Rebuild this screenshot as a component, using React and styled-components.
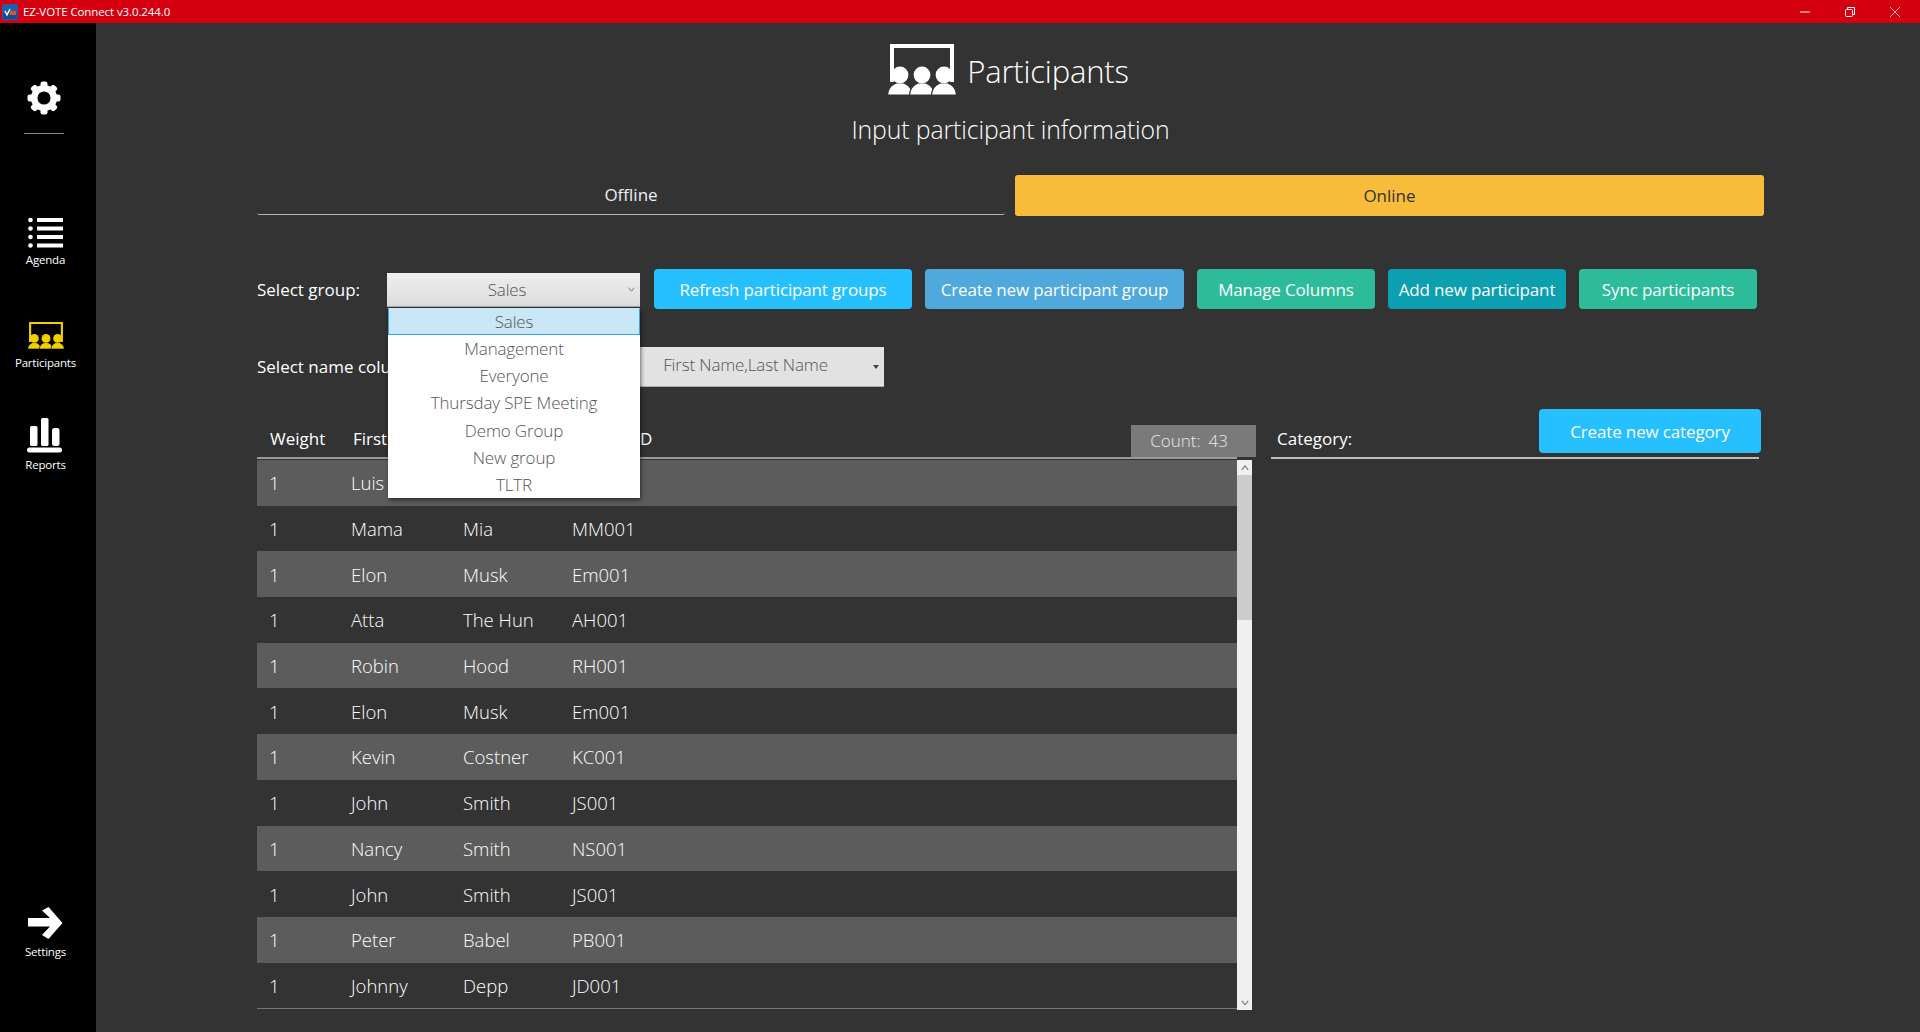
import React from 'react'
import styled, { createGlobalStyle } from 'styled-components'

const GlobalStyle = createGlobalStyle`
html, body {
  margin: 0;
  padding: 0;
  height: 100%;
  background: #333;
  overflow: hidden;
}
* { box-sizing: border-box; }
`

const FONT = `"Open Sans", "Liberation Sans", sans-serif`

const Page = styled.div`
width: 1920px;
height: 1032px;
display: flex;
flex-direction: column;
font-family: ${FONT};
color: #fff;
background: #333;
`

const TitleBar = styled.div`
height: 23px;
flex: none;
background: #d4000f;
display: flex;
align-items: center;
padding-left: 2px;
font-size: 11.5px;
`

const AppName = styled.span`
margin-left: 5px;
flex: 1;
letter-spacing: -0.1px;
`

const WindowControls = styled.div`
display: flex;
align-items: center;
padding-right: 20px;
gap: 35px;
`

const Body = styled.div`
flex: 1;
display: flex;
min-height: 0;
`

const Sidebar = styled.nav`
width: 96px;
flex: none;
background: #000;
display: flex;
flex-direction: column;
align-items: center;
padding: 58px 5px 73px 0;
`

const Gear = styled.div`
display: flex;
margin-right: 3px;
`

const Divider = styled.div`
width: 40px;
height: 1px;
margin: 18px 3px 0 0;
background: #8a8a8a;
`

const NavItem = styled.div`
display: flex;
flex-direction: column;
align-items: center;
margin-top: ${({ $top }) => $top}px;
${({ $bottom }) => $bottom ? 'margin-top: auto;' : ''}
`

const NavLabel = styled.span`
font-size: 11.5px;
line-height: 15px;
margin-top: ${({ $gap }) => $gap || 4}px;
letter-spacing: -0.2px;
`

const Main = styled.main`
flex: 1;
min-width: 0;
padding: 21px 156px 0 161px;
display: flex;
flex-direction: column;
`

const Header = styled.div`
display: flex;
justify-content: center;
align-items: center;
gap: 11px;
height: 51px;
padding-right: 4px;
`

const Title = styled.h1`
margin: 2px 0 0;
font-size: 31px;
font-weight: 300;
letter-spacing: -0.2px;
`

const Subtitle = styled.h2`
margin: 16px 0 0;
font-size: 24.8px;
line-height: 36px;
font-weight: 300;
text-align: center;
letter-spacing: -0.1px;
`

const Tabs = styled.div`
display: grid;
grid-template-columns: 748px 749px;
gap: 10px;
margin-top: 28px;
align-items: start;
`

const Tab = styled.div`
height: ${({ $active }) => $active ? 41 : 40}px;
display: flex;
align-items: center;
justify-content: center;
font-size: 17px;
border-radius: 3px;
${({ $active }) => $active
    ? 'background: #f8bc3b; color: #333; padding-bottom: 1px;'
    : 'border-bottom: 1px solid #b5b5b5; color: #eee;'}
`

const Row = styled.div`
display: flex;
align-items: center;
height: 40px;
margin-top: ${({ $top }) => $top}px;
`

const FieldLabel = styled.span`
width: ${({ $width }) => $width}px;
flex: none;
font-size: 17px;
white-space: nowrap;
overflow: hidden;
margin-top: ${({ $lift }) => $lift ? -2 : 0}px;
`

const SelectWrap = styled.div`
position: relative;
width: 253px;
height: ${({ $tall }) => $tall ? 40 : 34}px;
flex: none;
margin-top: ${({ $tall }) => $tall ? 0 : 2}px;
`

const Select = styled.div`
height: 100%;
display: flex;
align-items: center;
font-size: 17px;
font-weight: 300;
letter-spacing: -0.15px;
color: #555;
background: ${({ $flat }) => $flat ? '#e2e2e2' : 'linear-gradient(#efefef, #dcdcdc)'};
border-bottom: 1px solid #aaa;
`

const SelectValue = styled.span`
flex: 1;
text-align: center;
${({ $lift }) => $lift ? 'margin-top: -4px;' : ''}
`

const SelectArrow = styled.span`
width: ${({ $width }) => $width}px;
flex: none;
display: flex;
justify-content: flex-end;
padding-right: 5px;
`

const Dropdown = styled.ul`
position: absolute;
top: 35px;
left: 1px;
right: 0;
margin: 0;
padding: 0;
list-style: none;
background: #fff;
z-index: 5;
box-shadow: 1px 2px 4px rgba(0, 0, 0, 0.55);
`

const Option = styled.li`
height: ${({ $selected }) => $selected ? 27 : 27.2}px;
display: flex;
align-items: center;
justify-content: center;
font-size: 17px;
font-weight: 300;
letter-spacing: -0.15px;
color: #555;
${({ $selected }) => $selected ? 'background: #c9e7f7; border: 1px solid #35a7e4; border-top-color: #c9e7f7;' : ''}
`

const Button = styled.button`
height: ${({ $tall }) => $tall ? 44 : 40}px;
width: ${({ $width }) => $width}px;
flex: none;
margin-left: ${({ $left }) => $left}px;
padding: 0;
border: none;
border-radius: 4px;
font-family: inherit;
font-size: 17px;
letter-spacing: -0.15px;
color: #fff;
background: ${({ $color }) => $color};
`

const CategoryButton = styled(Button)`
margin: -1px -2px 0 0;
`

const Content = styled.div`
display: flex;
gap: 15px;
margin-top: 23px;
`

const TablePanel = styled.section`
width: 999px;
flex: none;
`

const TableHead = styled.div`
width: 980px;
height: 49px;
display: flex;
align-items: flex-end;
border-bottom: 2px solid #999;
`

const HeadColumns = styled.div`
flex: 1;
display: grid;
grid-template-columns: 83px 110px 109px 1fr;
padding: 0 0 6px 13px;
font-size: 17px;
line-height: 24px;
overflow: hidden;
white-space: nowrap;
`

const CountBox = styled.div`
width: 125px;
height: 32px;
flex: none;
margin: 0 -19px 0 0;
display: flex;
align-items: center;
justify-content: center;
gap: 8px;
padding: 0 9px 2px 0;
background: #7a7a7a;
color: #e8e8e8;
font-size: 17px;
font-weight: 300;
`

const TableBody = styled.div`
display: flex;
width: 995px;
height: 550px;
margin-top: 1px;
`

const Rows = styled.div`
width: 980px;
border-bottom: 1px solid #777;
flex: none;
height: 549px;
`

const DataRow = styled.div`
height: 45.7px;
display: grid;
grid-template-columns: 82px 112px 109px 1fr;
align-items: center;
padding-left: 12px;
font-size: 18.5px;
font-weight: 300;
background: ${({ $alt }) => $alt ? '#5c5c5c' : 'transparent'};
`

const Scrollbar = styled.div`
width: 15px;
flex: none;
background: #f0f0f0;
display: flex;
flex-direction: column;
align-items: center;
justify-content: space-between;
`

const ScrollTrack = styled.div`
flex: 1;
width: 100%;
`

const ScrollThumb = styled.div`
height: 145px;
background: #cdcdcd;
`

const ScrollButton = styled.div`
height: 15px;
width: 100%;
display: flex;
align-items: center;
justify-content: center;
`

const CategoryPanel = styled.section`
width: 488px;
flex: none;
`

const CategoryHead = styled.div`
height: 49px;
display: flex;
align-items: flex-start;
justify-content: space-between;
border-bottom: 2px solid #bbb;
padding-left: 6px;
`

const CategoryLabel = styled.span`
font-size: 17px;
line-height: 24px;
margin-top: 17px;
`

const Chevron = ({ up, size = 8, color = '#777' }) => (
  <svg width={size} height={size * 0.7} viewBox="0 0 10 7" fill="none" stroke={color} strokeWidth="1.4">
    <path d={up ? 'M1 6 L5 1 L9 6' : 'M1 1 L5 6 L9 1'} />
  </svg>
)

const AppLogo = () => (
  <svg width="16" height="16" viewBox="0 0 16 16">
    <rect width="16" height="16" rx="1.5" fill="#1f5fae" />
    <rect x="1" y="9" width="14" height="6" fill="#154a94" />
    <path d="M3 7 L5 11 L8 5" fill="none" stroke="#fff" strokeWidth="1.3" />
    <rect x="8" y="7" width="6" height="4" fill="#d8552b" />
  </svg>
)

const GearIcon = () => (
  <svg width="34" height="34" viewBox="0 0 34 34" fill="#fff">
    {[0, 45, 90, 135, 180, 225, 270, 315].map(a => (
      <rect key={a} x="13.5" y="0.5" width="7" height="8" rx="2.2" transform={`rotate(${a} 17 17)`} />
    ))}
    <circle cx="17" cy="17" r="9.8" fill="none" stroke="#fff" strokeWidth="6.5" />
  </svg>
)

const AgendaIcon = () => (
  <svg width="35" height="30" viewBox="0 0 35 30" fill="#fff">
    {[0, 8.5, 17, 25.5].map(y => (
      <g key={y}>
        <circle cx="2.5" cy={y + 2} r="2.3" />
        <rect x="9" y={y} width="26" height="4" />
      </g>
    ))}
  </svg>
)

const PARTICIPANT_X = [12, 34, 56]

const ParticipantsIcon = ({ width, height, color, bg }) => (
  <svg width={width} height={height} viewBox="0 0 68 51">
    <path d="M4 38 V2 H64 V38" fill="none" stroke={color} strokeWidth="4" />
    {PARTICIPANT_X.map(x => (
      <g key={x} fill={color} stroke={bg} strokeWidth="1.2">
        <path d={`M${x - 12.5} 51 Q${x - 12.5} 43 ${x - 4} 39 H${x + 4} Q${x + 12.5} 43 ${x + 12.5} 51 Z`} />
        <circle cx={x} cy="31" r="8.4" stroke="none" />
      </g>
    ))}
  </svg>
)

const ReportsIcon = () => (
  <svg width="36" height="35" viewBox="0 0 36 35" fill="#fff">
    <rect x="3" y="8" width="7.5" height="20" rx="1.5" />
    <rect x="14" y="0" width="7.5" height="28" rx="1.5" />
    <rect x="25" y="10" width="7.5" height="18" rx="2.5" />
    <rect x="0" y="29.5" width="35" height="5" rx="2.5" />
  </svg>
)

const ArrowIcon = () => (
  <svg width="35" height="33" viewBox="0 0 35 33" fill="#fff">
    <polygon points="0,11 22,11 14,3.5 20.5,0 34.5,16 20.5,32 14,28 22,19.5 0,19.5" />
  </svg>
)

const MinimizeIcon = () => (
  <svg width="10" height="10" viewBox="0 0 10 10">
    <path d="M0 5 H10" stroke="#fff" strokeWidth="1" />
  </svg>
)

const RestoreIcon = () => (
  <svg width="10" height="10" viewBox="0 0 10 10" fill="none" stroke="#fff" strokeWidth="1">
    <rect x="0.5" y="2.5" width="7" height="7" rx="1" />
    <path d="M2.5 2.5 V0.5 H9.5 V7.5 H7.5" />
  </svg>
)

const CloseIcon = () => (
  <svg width="10" height="10" viewBox="0 0 10 10">
    <path d="M0 0 L10 10 M10 0 L0 10" stroke="#f3b5b8" strokeWidth="1" />
  </svg>
)

const groups = ['Sales', 'Management', 'Everyone', 'Thursday SPE Meeting', 'Demo Group', 'New group', 'TLTR']

const participants = [
  ['Luis', '', ''],
  ['Mama', 'Mia', 'MM001'],
  ['Elon', 'Musk', 'Em001'],
  ['Atta', 'The Hun', 'AH001'],
  ['Robin', 'Hood', 'RH001'],
  ['Elon', 'Musk', 'Em001'],
  ['Kevin', 'Costner', 'KC001'],
  ['John', 'Smith', 'JS001'],
  ['Nancy', 'Smith', 'NS001'],
  ['John', 'Smith', 'JS001'],
  ['Peter', 'Babel', 'PB001'],
  ['Johnny', 'Depp', 'JD001']
]

export default function App () {
  return (
    <Page>
      <GlobalStyle />
      <TitleBar>
        <AppLogo />
        <AppName>EZ-VOTE Connect v3.0.244.0</AppName>
        <WindowControls>
          <MinimizeIcon />
          <RestoreIcon />
          <CloseIcon />
        </WindowControls>
      </TitleBar>
      <Body>
        <Sidebar>
          <Gear><GearIcon /></Gear>
          <Divider />
          <NavItem $top={84}>
            <AgendaIcon />
            <NavLabel>Agenda</NavLabel>
          </NavItem>
          <NavItem $top={55}>
            <ParticipantsIcon width={36} height={27} color="#f2d000" bg="#000" />
            <NavLabel $gap={6}>Participants</NavLabel>
          </NavItem>
          <NavItem $top={48}>
            <ReportsIcon />
            <NavLabel>Reports</NavLabel>
          </NavItem>
          <NavItem $bottom>
            <ArrowIcon />
            <NavLabel>Settings</NavLabel>
          </NavItem>
        </Sidebar>
        <Main>
          <Header>
            <ParticipantsIcon width={68} height={51} color="#fff" bg="#333" />
            <Title>Participants</Title>
          </Header>
          <Subtitle>Input participant information</Subtitle>
          <Tabs>
            <Tab>Offline</Tab>
            <Tab $active>Online</Tab>
          </Tabs>
          <Row $top={53}>
            <FieldLabel $width={130}>Select group:</FieldLabel>
            <SelectWrap>
              <Select>
                <SelectValue>Sales</SelectValue>
                <SelectArrow $width={13}><Chevron size={7} /></SelectArrow>
              </Select>
              <Dropdown>
                {groups.map((group, index) => (
                  <Option key={group} $selected={index === 0}>{group}</Option>
                ))}
              </Dropdown>
            </SelectWrap>
            <Button $width={258} $left={14} $color="#26c0ff">Refresh participant groups</Button>
            <Button $width={259} $left={13} $color="#4fa9dc">Create new participant group</Button>
            <Button $width={178} $left={13} $color="#2dbc9a">Manage Columns</Button>
            <Button $width={178} $left={13} $color="#0c9faf">Add new participant</Button>
            <Button $width={178} $left={13} $color="#2dbc9a">Sync participants</Button>
          </Row>
          <Row $top={38}>
            <FieldLabel $width={374} $lift>Select name column:</FieldLabel>
            <SelectWrap $tall>
              <Select $flat>
                <SelectValue $lift>First Name,Last Name</SelectValue>
                <SelectArrow $width={24}>
                  <svg width="6" height="4" viewBox="0 0 6 4"><path d="M0 0 H6 L3 4 Z" fill="#444" /></svg>
                </SelectArrow>
              </Select>
            </SelectWrap>
          </Row>
          <Content>
            <TablePanel>
              <TableHead>
                <HeadColumns>
                  <span>Weight</span>
                  <span>First Name</span>
                  <span>Last Name</span>
                  <span>Keypad ID</span>
                </HeadColumns>
                <CountBox><span>Count:</span><span>43</span></CountBox>
              </TableHead>
              <TableBody>
                <Rows>
                  {participants.map(([first, last, id], index) => (
                    <DataRow key={index} $alt={index % 2 === 0}>
                      <span>1</span>
                      <span>{first}</span>
                      <span>{last}</span>
                      <span>{id}</span>
                    </DataRow>
                  ))}
                </Rows>
                <Scrollbar>
                  <ScrollButton><Chevron up /></ScrollButton>
                  <ScrollTrack><ScrollThumb /></ScrollTrack>
                  <ScrollButton><Chevron /></ScrollButton>
                </Scrollbar>
              </TableBody>
            </TablePanel>
            <CategoryPanel>
              <CategoryHead>
                <CategoryLabel>Category:</CategoryLabel>
                <CategoryButton $tall $width={222} $color="#26c0ff">Create new category</CategoryButton>
              </CategoryHead>
            </CategoryPanel>
          </Content>
        </Main>
      </Body>
    </Page>
  )
}
